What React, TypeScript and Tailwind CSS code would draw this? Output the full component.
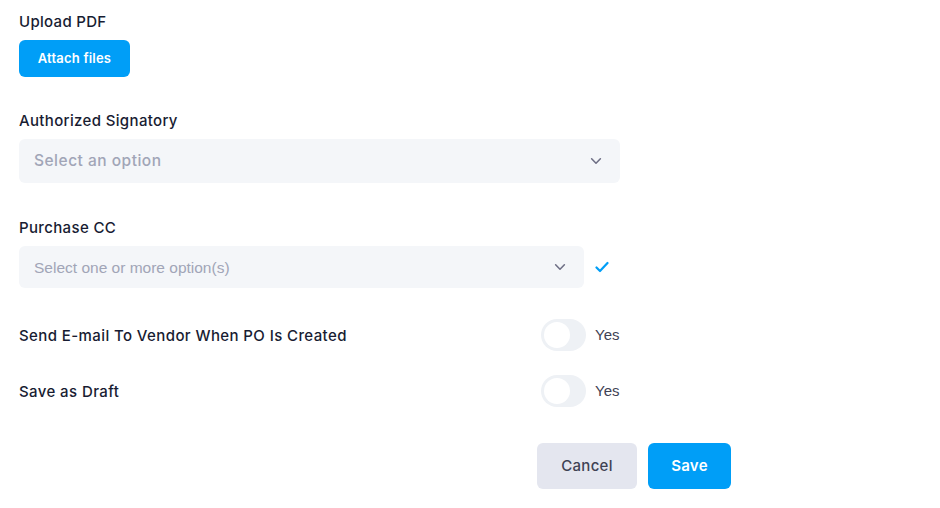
import React from "react";

const Chevron = () => (
  <svg width="14" height="14" viewBox="0 0 16 16" fill="none">
    <path d="M3 5.5l5 5 5-5" stroke="#6e6f85" strokeWidth="1.8" strokeLinecap="round" strokeLinejoin="round" />
  </svg>
);

const Toggle = () => (
  <div className="w-[45px] h-[32px] rounded-full bg-[#eef1f5] flex items-center pl-[3px]">
    <div className="w-[26px] h-[26px] rounded-full bg-white" />
  </div>
);

export default function App() {
  const poppins = { fontFamily: "Inter, 'Noto Sans', sans-serif" };
  const arial = { fontFamily: "'Liberation Sans', Arial, sans-serif" };
  return (
    <div className="w-[940px] h-[508px] bg-white pl-[19px] pt-[11px] text-[#181c32]" style={poppins}>
      <div className="h-[22px] leading-[22px] text-[15px] font-medium tracking-[0.3px]">Upload PDF</div>
      <button className="mt-[7px] w-[111px] h-[37px] rounded-[6px] bg-[#009ef7] text-white text-[13px] font-semibold tracking-[0.2px]">
        Attach files
      </button>

      <div className="mt-[33px] h-[22px] leading-[22px] text-[15px] font-medium tracking-[0.35px]">Authorized Signatory</div>
      <div className="mt-[7px] w-[601px] h-[44px] rounded-[6px] bg-[#f4f6f9] flex items-center justify-between pl-[15px] pr-[17px]">
        <span className="text-[15.5px] font-medium text-[#a1a5b7] tracking-[0.5px]">Select an option</span>
        <Chevron />
      </div>

      <div className="mt-[34px] h-[22px] leading-[22px] text-[15px] font-medium tracking-[0.35px]">Purchase CC</div>
      <div className="mt-[7px] flex items-center">
        <div className="w-[565px] h-[42px] rounded-[6px] bg-[#f4f6f9] flex items-center justify-between pl-[15px] pr-[17px]">
          <span className="text-[15.5px] text-[#a1a5b7] pt-[1px]" style={arial}>
            Select one or more option(s)
          </span>
          <Chevron />
        </div>
        <svg className="ml-[11px]" width="14" height="12" viewBox="0 0 14 12" fill="none">
          <path d="M1.5 6.5l3.5 3.5 7.5-8" stroke="#009ef7" strokeWidth="2.2" strokeLinecap="round" strokeLinejoin="round" />
        </svg>
      </div>

      <div className="mt-[31px] flex items-center h-[32px]">
        <div className="w-[522px] text-[15px] font-medium tracking-[0.4px] pt-[3px]">Send E-mail To Vendor When PO Is Created</div>
        <Toggle />
        <span className="ml-[9px] text-[15px] text-[#3f4254] pt-[1px]" style={arial}>Yes</span>
      </div>
      <div className="mt-[24px] flex items-center h-[32px]">
        <div className="w-[522px] text-[15px] font-medium tracking-[0.4px] pt-[3px]">Save as Draft</div>
        <Toggle />
        <span className="ml-[9px] text-[15px] text-[#3f4254] pt-[1px]" style={arial}>Yes</span>
      </div>

      <div className="mt-[36px] w-[712px] flex justify-end gap-[11px]">
        <button className="w-[100px] h-[46px] rounded-[6px] bg-[#e4e6ef] text-[#3f4254] text-[15px] font-medium tracking-[0.3px]">Cancel</button>
        <button className="w-[83px] h-[46px] rounded-[6px] bg-[#009ef7] text-white text-[15px] font-semibold tracking-[0.3px]">Save</button>
      </div>
    </div>
  );
}
